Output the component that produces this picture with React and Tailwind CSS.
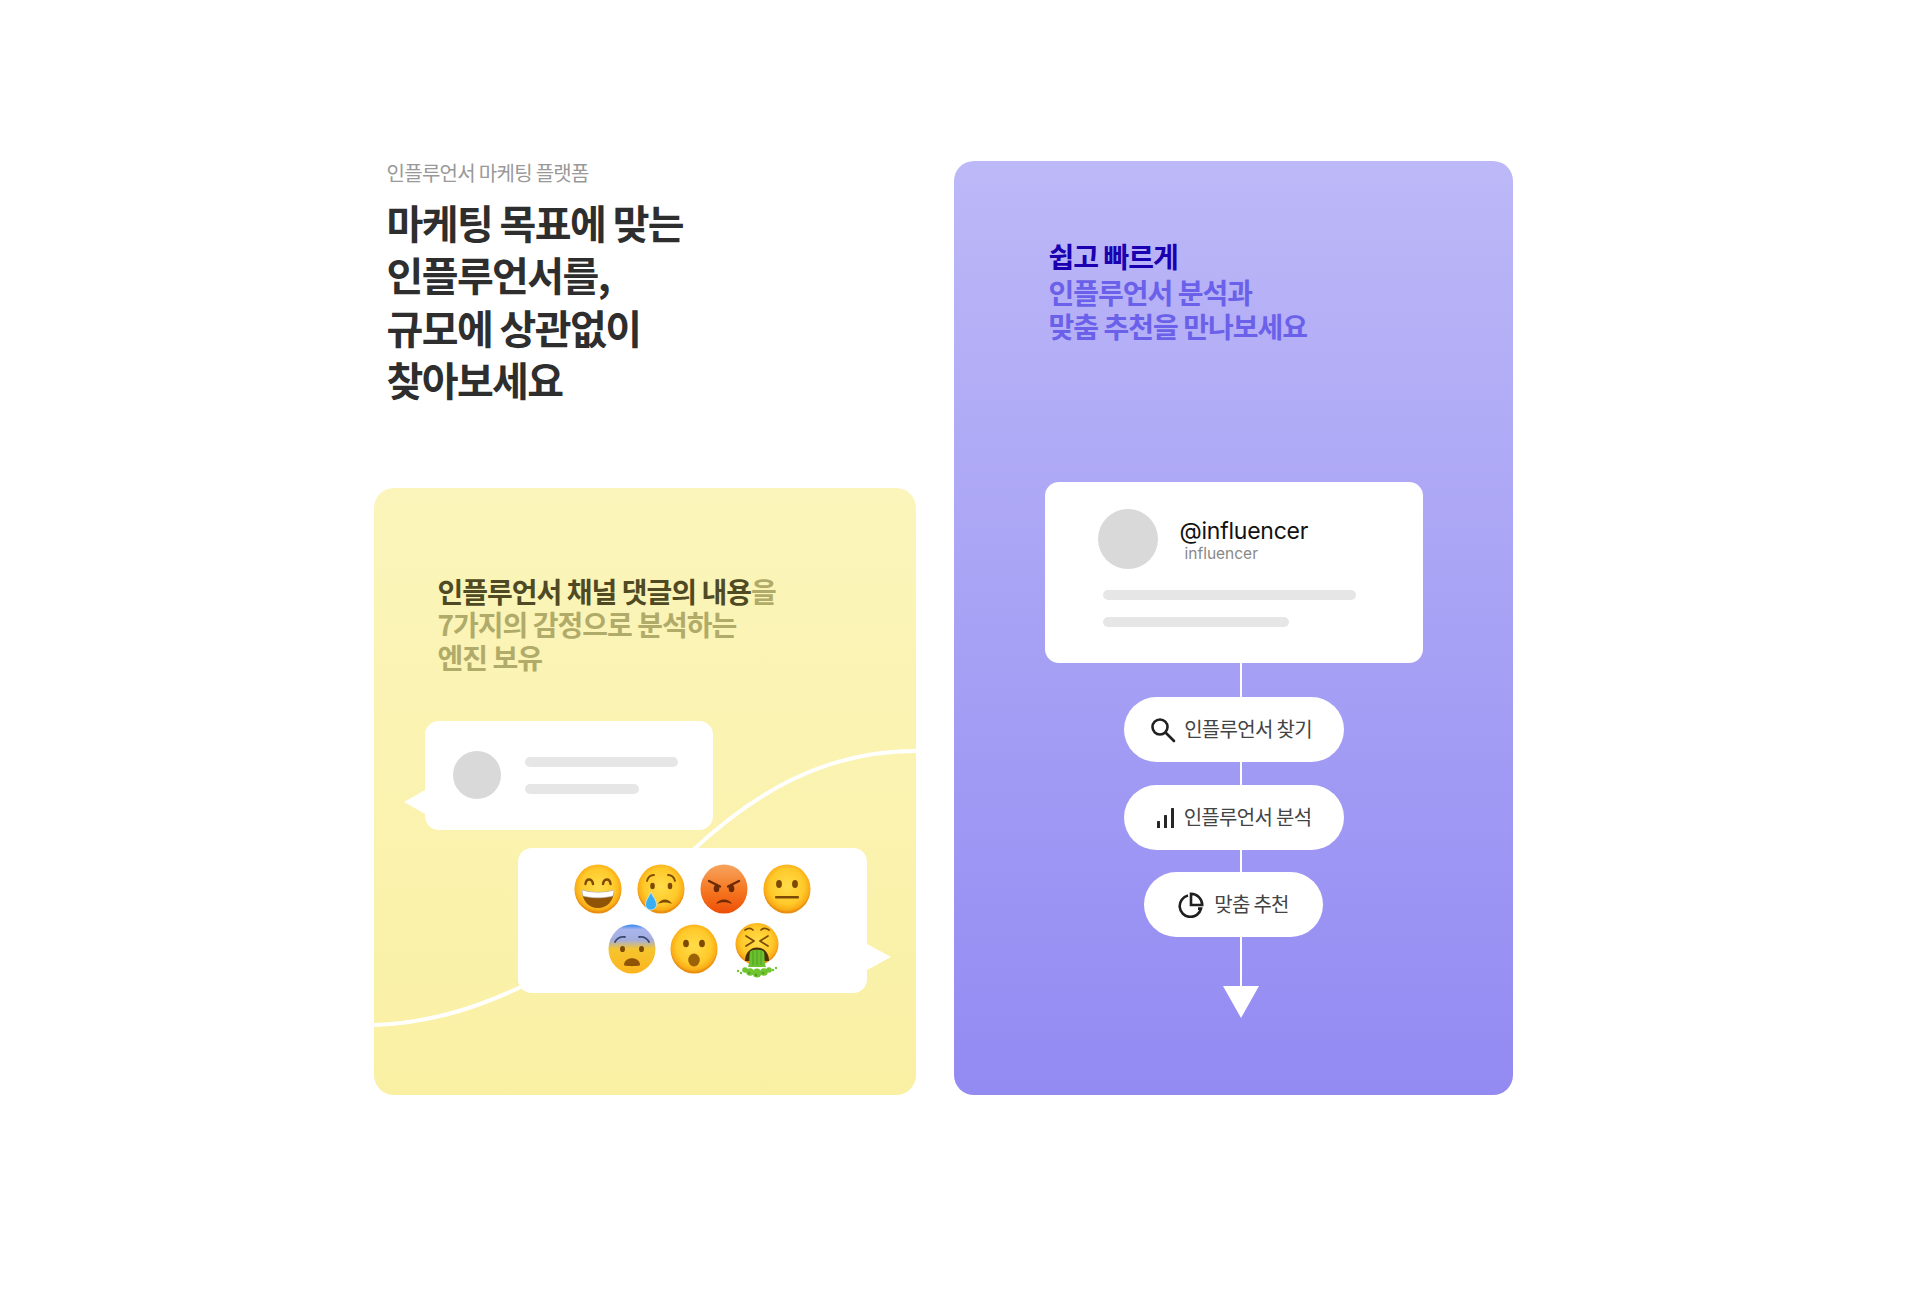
const kr = "font-['Noto_Sans_CJK_KR','Noto_Sans',sans-serif]";

const FaceDefs = () => (
  <svg width="0" height="0" className="absolute">
    <defs>
      <radialGradient id="yellowFace" cx="50%" cy="45%" r="52%">
        <stop offset="0%" stopColor="#ffdd4a" />
        <stop offset="70%" stopColor="#ffc92a" />
        <stop offset="92%" stopColor="#fbad17" />
        <stop offset="100%" stopColor="#e88f10" />
      </radialGradient>
      <linearGradient id="angryFace" x1="0" y1="0" x2="0" y2="1">
        <stop offset="0%" stopColor="#f7a45e" />
        <stop offset="55%" stopColor="#f5761f" />
        <stop offset="100%" stopColor="#ec4e08" />
      </linearGradient>
      <linearGradient id="fearFace" x1="0" y1="0" x2="0" y2="1">
        <stop offset="0%" stopColor="#2f86f0" />
        <stop offset="10%" stopColor="#a9b4ee" />
        <stop offset="32%" stopColor="#a4aedd" />
        <stop offset="50%" stopColor="#f5c52f" />
        <stop offset="100%" stopColor="#fdb51e" />
      </linearGradient>
    </defs>
  </svg>
);

const Face = ({ fill = "url(#yellowFace)", children }) => (
  <svg width="48" height="50" viewBox="0 0 48 50" className="shrink-0">
    <ellipse cx="24" cy="25" rx="23.5" ry="24.5" fill={fill} />
    {children}
  </svg>
);

const Grin = () => (
  <Face>
    <path d="M11.500 20c.6-6 6.500-6 7.500 0M29 20c1-6 6.900-6 7.500 0" fill="none" stroke="#7c4a05" strokeWidth="2.400" strokeLinecap="round" />
    <path d="M8 26c10 3 22 3 32 0 0 11-7 18-16 18S8 37 8 26z" fill="#8f5406" />
    <path d="M8 26c10 3 22 3 32 0 0 2-.4 4-1.100 6-9 2.400-21 2.400-29.800 0-.7-2-1.100-4-1.100-6z" fill="#fff" stroke="#b8b8b8" strokeWidth=".6" />
  </Face>
);

const Cry = () => (
  <Face>
    <path d="M10 17c1-4 4-6 7-6M38 17c-1-4-4-6-7-6" fill="none" stroke="#7c4a05" strokeWidth="1.800" strokeLinecap="round" />
    <ellipse cx="15.500" cy="22" rx="2.300" ry="3.300" fill="#7c4a05" />
    <ellipse cx="33" cy="22" rx="2.300" ry="3.300" fill="#7c4a05" />
    <path d="M21 40c3-6 11-6 14 0-4-2-10-2-14 0z" fill="#7c4a05" />
    <path d="M14 28c2 5 5.500 8 5.500 12.500a5.500 5.500 0 0 1-11 0C8.500 36 12 33 14 28z" fill="#39aef0" stroke="#d8f2ff" strokeWidth=".7" />
  </Face>
);

const Angry = () => (
  <Face fill="url(#angryFace)">
    <path d="M9 17l11 5.500M39 17l-11 5.500" fill="none" stroke="#6e2a05" strokeWidth="2.400" strokeLinecap="round" />
    <ellipse cx="16.500" cy="24.500" rx="2.800" ry="3.800" fill="#6e2a05" />
    <ellipse cx="31.500" cy="24.500" rx="2.800" ry="3.800" fill="#6e2a05" />
    <path d="M16 40c3-6 13-6 16 0-5-2.400-11-2.400-16 0z" fill="#6e2a05" />
  </Face>
);

const Neutral = () => (
  <Face>
    <ellipse cx="16" cy="20" rx="2.900" ry="4" fill="#7c4a05" />
    <ellipse cx="32" cy="20" rx="2.900" ry="4" fill="#7c4a05" />
    <rect x="12" y="32" width="24" height="2.400" rx="1" fill="#7c4a05" />
  </Face>
);

const Fear = () => (
  <Face fill="url(#fearFace)">
    <path d="M7 18c2-4 6-5.500 10-5M41 18c-2-4-6-5.500-10-5" fill="none" stroke="#3c4a70" strokeWidth="1.800" strokeLinecap="round" />
    <ellipse cx="14.500" cy="25" rx="2.500" ry="3.100" fill="#7c4a05" />
    <ellipse cx="33.500" cy="25" rx="2.500" ry="3.100" fill="#7c4a05" />
    <path d="M16 41c0-9 16-9 16 0 0 1.500-16 1.500-16 0z" fill="#8f5406" />
  </Face>
);

const Wow = () => (
  <Face>
    <ellipse cx="16" cy="19.500" rx="2.900" ry="3.800" fill="#7c4a05" />
    <ellipse cx="32" cy="19.500" rx="2.900" ry="3.800" fill="#7c4a05" />
    <ellipse cx="24" cy="36" rx="5.800" ry="6.500" fill="#9c6206" />
  </Face>
);

const Sick = () => (
  <svg width="50" height="56" viewBox="0 0 50 56" className="shrink-0 -mt-[1px]">
    <ellipse cx="25" cy="21" rx="21.500" ry="21" fill="url(#yellowFace)" />
    <path d="M13 7c3-2 6-2 8 0M37 7c-3-2-6-2-8 0M14 13l8 5-8 5M36 13l-8 5 8 5" fill="none" stroke="#7c4a05" strokeWidth="1.700" strokeLinecap="round" strokeLinejoin="round" />
    <path d="M13 38c0-18 24-18 24 0z" fill="#4a3208" />
    <path d="M16 44c2-4 1-11 2-15 1-3 13-3 14 0 1 4 0 11 2 15z" fill="#6cc22e" />
    <path d="M21 28v14M25 27v15M29 28v14" stroke="#4f9c20" strokeWidth="1" />
    <g fill="#6fc42f">
      <circle cx="13" cy="47" r="2.800" />
      <circle cx="18" cy="49" r="3.800" />
      <circle cx="25" cy="50" r="4.500" />
      <circle cx="32" cy="49" r="3.800" />
      <circle cx="37" cy="47" r="2.800" />
      <circle cx="44" cy="45" r="1.200" />
      <circle cx="41" cy="47" r="1.200" />
      <circle cx="6" cy="48" r="1.200" />
      <circle cx="9" cy="50" r="1.200" />
    </g>
    <g fill="#4f9c20">
      <circle cx="17" cy="50" r="1.100" />
      <circle cx="24" cy="52" r="1.200" />
      <circle cx="31" cy="50" r="1.100" />
    </g>
  </svg>
);

const SearchIcon = () => (
  <svg width="26" height="26" viewBox="0 0 26 26" fill="none" stroke="#1f1f1f" strokeWidth="2.600">
    <circle cx="10" cy="10" r="7.500" />
    <path d="M15.500 15.500l8.500 8.500" strokeLinecap="round" />
  </svg>
);

const BarsIcon = () => (
  <svg width="20" height="22" viewBox="0 0 20 22" fill="#262626">
    <rect x="1" y="14" width="3" height="7" rx=".5" />
    <rect x="8" y="8" width="3" height="13" rx=".5" />
    <rect x="15" y="1" width="3" height="20" rx=".5" />
  </svg>
);

const PieIcon = () => (
  <svg width="26" height="26" viewBox="0 0 26 26" fill="none" stroke="#1f1f1f" strokeWidth="2.600">
    <path d="M10 3.600a10.800 10.800 0 1 0 13 13h-3" />
    <path d="M13 1.800a11.200 11.200 0 0 1 11.200 11.200H13z" strokeLinejoin="miter" />
  </svg>
);

const Connector = ({ h }) => <div className={`w-0.5 ml-[14px] bg-white ${h}`} />;

const Pill = ({ icon, label, width, gap }) => (
  <div className={`flex h-[65px] items-center justify-center rounded-full bg-white ${width} ${gap}`}>
    {icon}
    <span className={`${kr} pb-[2px] text-[20px] tracking-[-0.035em] text-[#444]`}>{label}</span>
  </div>
);

const Bar = ({ w }) => <div className={`h-2.5 rounded-full bg-[#e6e6e6] ${w}`} />;

export default function App() {
  return (
    <div className="min-h-[1304px] bg-white pt-[161px] pr-[34px] flex justify-center items-start">
      <FaceDefs />
      <div className="flex gap-[38px]">
        <div className="w-[542px]">
          <div className="pl-[13px]">
            <p className={`${kr} text-[20px] leading-6 tracking-[-0.035em] text-[#999]`}>인플루언서 마케팅 플랫폼</p>
            <h1 className={`${kr} mt-[11px] text-[40px] font-bold leading-[52.4px] tracking-[-0.04em] text-[#2e2e2e]`}>
              마케팅 목표에 맞는
              <br />
              인플루언서를,
              <br />
              규모에 상관없이
              <br />
              찾아보세요
            </h1>
          </div>

          <div className="relative mt-[82px] h-[607px] overflow-hidden rounded-[20px] bg-gradient-to-b from-[#fbf5bb] to-[#faf0a4] pt-[87px]">
            <svg width="542" height="607" viewBox="0 0 542 607" fill="none" className="absolute left-0 top-0">
              <path d="M0 537C60 535 110 518 170 488 230 455 270 405 318 363 380 305 450 263 542 263" stroke="#fff" strokeWidth="4" />
            </svg>

            <div className="relative">
              <p className={`${kr} pl-[64px] text-[28px] font-semibold leading-[33px] tracking-[-0.035em] text-[#b1ab6a]`}>
                <span className="text-[#4f4a24]">인플루언서 채널 댓글의 내용</span>을
                <br />
                7가지의 감정으로 분석하는
                <br />
                엔진 보유
              </p>

              <div className="relative ml-[51px] mt-[47px] flex h-[109px] w-[288px] items-center gap-[24px] rounded-[14px] bg-white pl-[28px]">
                <div className="absolute -left-[21px] top-[69px] h-0 w-0 border-y-[12px] border-r-[21px] border-y-transparent border-r-white" />
                <div className="h-12 w-12 rounded-full bg-[#d9d9d9]" />
                <div className="flex flex-col gap-[17px]">
                  <Bar w="w-[153px]" />
                  <Bar w="w-[114px]" />
                </div>
              </div>

              <div className="relative ml-[144px] mt-[18px] flex h-[145px] w-[349px] flex-col items-center gap-[10px] rounded-[14px] bg-white pt-[16px]">
                <div className="absolute -right-[24px] top-[96px] h-0 w-0 border-y-[13px] border-l-[24px] border-y-transparent border-l-white" />
                <div className="flex gap-[15px]">
                  <Grin />
                  <Cry />
                  <Angry />
                  <Neutral />
                </div>
                <div className="flex gap-[14px] pl-[5px]">
                  <Fear />
                  <Wow />
                  <Sick />
                </div>
              </div>
            </div>
          </div>
        </div>

        <div className="flex h-[934px] w-[559px] flex-col rounded-[20px] bg-gradient-to-b from-[#bdb8f7] to-[#938af2] pt-[78px]">
          <div className={`${kr} pl-[95px] text-[28px] font-semibold leading-[34px] tracking-[-0.035em] text-[#6a60ea]`}>
            <p className="mb-[2px] text-[#1a00b0]">쉽고 빠르게</p>
            <p>인플루언서 분석과</p>
            <p>맞춤 추천을 만나보세요</p>
          </div>

          <div className="ml-[91px] mt-[139px] h-[181px] w-[378px] rounded-[14px] bg-white pl-[53px] pt-[27px]">
            <div className="flex items-center gap-[22px]">
              <div className="h-[60px] w-[60px] rounded-full bg-[#d9d9d9]" />
              <div className="pt-[4px] font-['Inter',sans-serif]">
                <p className="text-[23px] leading-[26px] tracking-[-0.01em] text-[#111]">@influencer</p>
                <p className="pl-[5px] text-[15.500px] leading-[20px] text-[#888]">influencer</p>
              </div>
            </div>
            <div className="ml-[5px] mt-[21px] flex flex-col gap-[17px]">
              <Bar w="w-[253px]" />
              <Bar w="w-[186px]" />
            </div>
          </div>

          <div className="ml-[91px] flex w-[378px] flex-col items-center">
            <Connector h="h-[34px]" />
            <Pill icon={<SearchIcon />} label="인플루언서 찾기" width="w-[220px] pr-[5px]" gap="gap-2" />
            <Connector h="h-[23px]" />
            <Pill icon={<BarsIcon />} label="인플루언서 분석" width="w-[220px]" gap="gap-2" />
            <Connector h="h-[22px]" />
            <Pill icon={<PieIcon />} label="맞춤 추천" width="w-[179px]" gap="gap-[10px]" />
            <Connector h="h-[49px]" />
            <div className="ml-[14px] h-0 w-0 border-x-[18.500px] border-t-[32px] border-x-transparent border-t-white" />
          </div>
        </div>
      </div>
    </div>
  );
}
